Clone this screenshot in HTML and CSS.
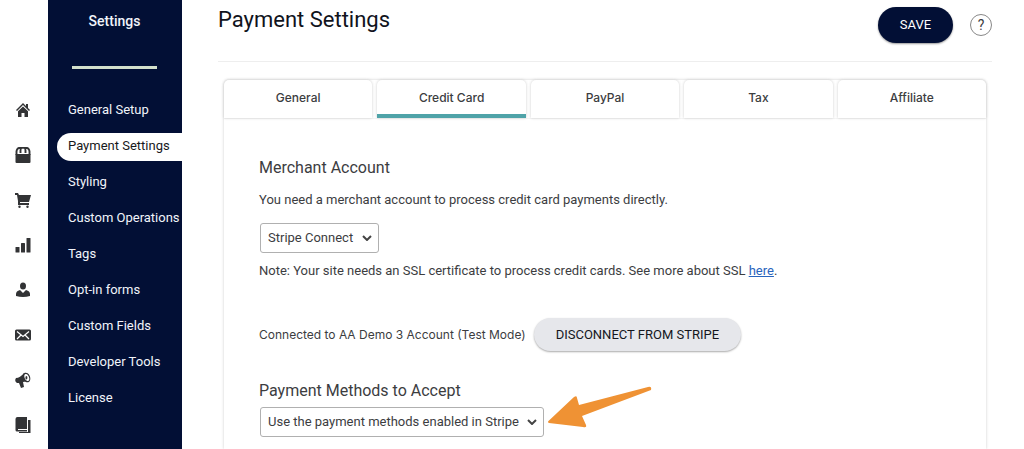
FILE: index.html
```html
<!DOCTYPE html>
<html lang="en">
<head>
<meta charset="utf-8">
<title>Payment Settings</title>
<link rel="stylesheet" href="styles.css">
</head>
<body>
<div class="app">
  <nav class="rail" aria-label="Sections">
    <a href="#" aria-label="Home"><svg viewBox="0 0 16 16"><path d="M8 1 1 8l1 1 6-6 6 6 1-1-2-2V2h-2v2z"/><path d="M3 9.300 8 4.400l5 4.900V15H9.500v-4h-3v4H3z"/></svg></a>
    <a href="#" aria-label="Products"><svg viewBox="0 0 16 16"><path d="M.5 7h15v8a1 1 0 0 1-1 1h-13a1 1 0 0 1-1-1z"/><path d="M1.500 8V4.500Q2 .8 5 .8h6q3 0 3.500 3.700V8M5.500 6V3.500q0-2 1-2.500M10.500 6V3.500q0-2-1-2.500" fill="none" stroke="currentColor" stroke-width="1.900"/></svg></a>
    <a href="#" aria-label="Orders"><svg viewBox="0 0 16 16"><path d="M0 1h3l1 2h12l-2 7H5v1h9v2H3V9L2 3H0z"/><circle cx="4.500" cy="14.800" r="1.200"/><circle cx="12.500" cy="14.800" r="1.200"/></svg></a>
    <a href="#" aria-label="Reports"><svg viewBox="0 0 16 16"><rect x=".5" y="10" width="4" height="5.500" rx=".5"/><rect x="6" y="6" width="4" height="9.500" rx=".5"/><rect x="11.500" y="1" width="4" height="14.500" rx=".5"/></svg></a>
    <a href="#" aria-label="Contacts"><svg viewBox="0 0 16 16"><ellipse cx="8" cy="4" rx="3" ry="3.500"/><path d="M1 14v-2q0-3 4-4l3 3 3-3q4 1 4 4v2q-7 2-14 0z"/></svg></a>
    <a href="#" aria-label="Mail"><svg viewBox="0 0 16 16"><rect x="0" y="2.500" width="16" height="11" rx="1.500"/><path d="m2 4.500 6 5 6-5M2 12l4-4m8 4-4-4" fill="none" stroke="#fff" stroke-width="1.200"/></svg></a>
    <a href="#" aria-label="Promotions"><svg viewBox="0 0 16 16"><path d="M1 6q4 0 8-5l5 9q-3-1-6 0l1 5-3 1-2-5H2Q-1 9 1 6z"/><ellipse cx="11.600" cy="5.500" rx="3.500" ry="5" transform="rotate(-20 11.600 5.500)"/><ellipse cx="11.800" cy="5.500" rx="2.200" ry="3.700" transform="rotate(-20 11.800 5.500)" fill="#fff"/><ellipse cx="11.400" cy="5.700" rx="1" ry="1.700"/></svg></a>
    <a href="#" aria-label="Courses"><svg viewBox="0 0 16 16"><path d="M2.500 0H12v12H3v1h9v1.500H2Q.5 14.500.5 13V2q0-2 2-2z"/><path d="M13 3h2.500v13H4v-1h9z"/></svg></a>
  </nav>
  <aside class="side">
    <h2>Settings</h2>
    <nav class="menu" aria-label="Settings">
      <a href="#">General Setup</a>
      <a href="#" class="current" aria-current="page">Payment Settings</a>
      <a href="#">Styling</a>
      <a href="#">Custom Operations</a>
      <a href="#">Tags</a>
      <a href="#">Opt-in forms</a>
      <a href="#">Custom Fields</a>
      <a href="#">Developer Tools</a>
      <a href="#">License</a>
    </nav>
  </aside>
  <main class="main">
    <header class="header">
      <h1>Payment Settings</h1>
      <button class="save" type="button">SAVE</button>
      <button class="help" type="button" aria-label="Help">?</button>
    </header>
    <div class="card">
      <div class="tabs" role="tablist">
        <button role="tab" type="button">General</button>
        <button role="tab" type="button" aria-selected="true" class="active">Credit Card</button>
        <button role="tab" type="button">PayPal</button>
        <button role="tab" type="button">Tax</button>
        <button role="tab" type="button">Affiliate</button>
      </div>
      <div class="body">
        <h3 id="merchant">Merchant Account</h3>
        <p class="intro">You need a merchant account to process credit card payments directly.</p>
        <div class="select">
          <select aria-labelledby="merchant"><option>Stripe Connect</option></select>
          <svg class="chevron" viewBox="0 0 10 6"><path d="m1 1 4 4 4-4"/></svg>
        </div>
        <p class="note">Note: Your site needs an SSL certificate to process credit cards. See more about SSL <a href="#">here</a>.</p>
        <div class="connection">
          <span>Connected to AA Demo 3 Account (Test Mode)</span>
          <button class="disconnect" type="button">DISCONNECT FROM STRIPE</button>
        </div>
        <h3 id="methods">Payment Methods to Accept</h3>
        <div class="select wide">
          <select aria-labelledby="methods"><option>Use the payment methods enabled in Stripe</option></select>
          <svg class="chevron" viewBox="0 0 10 6"><path d="m1 1 4 4 4-4"/></svg>
          <svg class="arrow" viewBox="0 0 105 42"><path d="M2 34.500 27 11q3-2 3 1l2 7 69-18q4-1 3 3L35 30l4 9q1 3-3 2L2 37q-2-1 0-2.500z"/></svg>
        </div>
      </div>
    </div>
  </main>
</div>
</body>
</html>
```
FILE: styles.css
```css
* { box-sizing: border-box; }
body {
  margin: 0;
  background: #fff;
  color: #3c3d3f;
  font: 13px/20px Roboto, sans-serif;
}
h1, h2, h3, p { margin: 0; }
button, select { font: inherit; color: inherit; }

.app { display: flex; min-height: 100vh; }

.rail {
  flex: 0 0 48px;
  display: flex;
  flex-direction: column;
  align-items: center;
  gap: 29px;
  padding: 102px 2px 0 0;
  color: #323335;
}
.rail a { display: flex; color: inherit; }
.rail svg { width: 16px; height: 16px; fill: currentColor; }

.side {
  flex: 0 0 134px;
  padding-top: 11px;
  background: #020f35;
  color: #f1f4fa;
}
.side h2 {
  margin: 0 25px 28px 24px;
  padding-bottom: 35px;
  border-bottom: 3px solid #d3e0cc;
  font-size: 14px;
  line-height: 20px;
  font-weight: 500;
  text-align: center;
}
.menu { display: flex; flex-direction: column; gap: 8px; }
.menu a {
  margin-left: 9px;
  padding: 3px 0 5px 11px;
  border-radius: 14px 0 0 14px;
  color: inherit;
  text-decoration: none;
  white-space: nowrap;
}
.menu .current { background: #fff; color: #18191c; }

.main {
  flex: 1;
  display: flex;
  flex-direction: column;
  min-width: 0;
  padding: 0 32px 0 36px;
}
.header {
  display: flex;
  align-items: flex-start;
  height: 62px;
  padding-top: 7px;
  border-bottom: 1px solid #eee;
}
.header h1 {
  flex: 1;
  color: #10131c;
  font-size: 22px;
  line-height: 26px;
  font-weight: 400;
}
.save {
  width: 75px;
  height: 36px;
  border: 0;
  border-radius: 18px;
  background: #020f35;
  color: #fff;
  box-shadow: 0 1px 2px #999;
}
.help {
  width: 22px;
  height: 22px;
  margin: 7px 0 0 17px;
  padding: 0;
  border: 1px solid #888;
  border-radius: 50%;
  background: #fff;
  font-size: 14px;
}

.card {
  flex: 1;
  margin: 18px 6px 0;
  border-radius: 5px 5px 0 0;
  box-shadow: 0 0 3px #ccc;
}
.tabs {
  display: grid;
  grid-template-columns: repeat(5, 1fr);
  gap: 5px;
  border-bottom: 1px solid #f4f4f4;
}
.tabs button {
  height: 38px;
  padding: 0 0 2px;
  border: 0;
  border-radius: 5px 5px 0 0;
  background: #fff;
  box-shadow: 0 0 3px #ccc;
  font: 500 12px/20px Inter, sans-serif;
}
.tabs .active { padding: 2px 0 0; border-bottom: 4px solid #4fa3a8; }

.body { padding: 38px 35px 0; }
.body h3 { font-size: 16px; line-height: 22px; font-weight: 400; }
.intro { margin-top: 11px; }
.note { margin-top: 8px; }
.note a { color: #2864bd; }
.select { position: relative; width: fit-content; margin: 13px 0 0 1px; }
.select select {
  display: block;
  height: 30px;
  padding: 0 24px 0 7px;
  border: 1px solid #b0b0b0;
  border-radius: 3px;
  background: #fff;
  appearance: none;
}
.chevron {
  position: absolute;
  top: 12px;
  right: 7px;
  width: 10px;
  height: 6px;
  fill: none;
  stroke: #444;
  stroke-width: 2;
  pointer-events: none;
}
.connection {
  display: flex;
  align-items: center;
  gap: 8px;
  margin: 37px 0 29px;
  font-family: Inter, sans-serif;
  font-size: 12px;
}
.disconnect {
  height: 33px;
  padding: 0 22px;
  border: 0;
  border-radius: 17px;
  background: #e6e7eb;
  color: #14161d;
  box-shadow: 0 1px 2px #aaa;
  font: 13px/20px Roboto, sans-serif;
}
.wide { margin-top: 5px; }
.arrow {
  position: absolute;
  top: -21px;
  left: calc(100% + 3px);
  width: 105px;
  height: 42px;
  fill: #ef9234;
}
```
